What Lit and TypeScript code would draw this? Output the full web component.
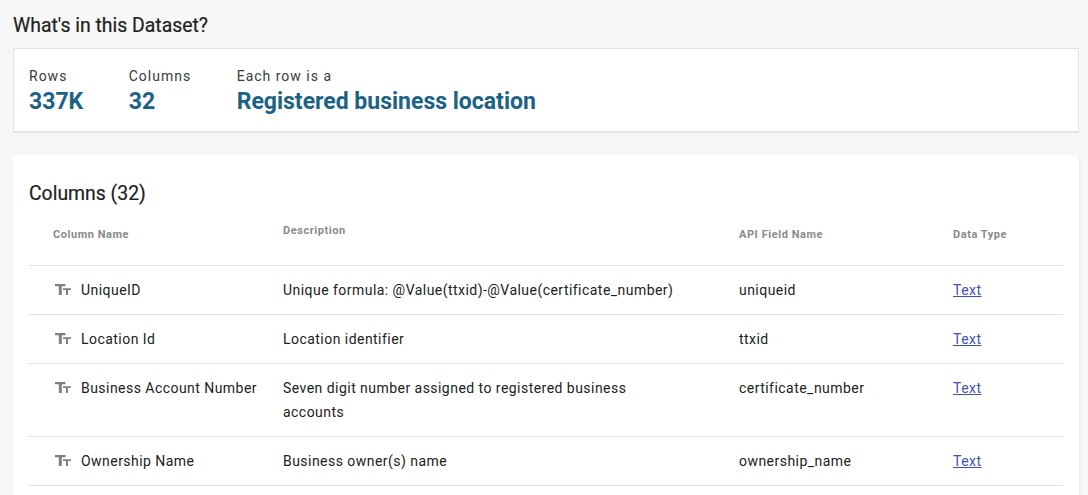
import { LitElement, html, css } from "lit";
import { customElement } from "lit/decorators.js";

const rows = [
  { name: "UniqueID", desc: "Unique formula: @Value(ttxid)-@Value(certificate_number)", api: "uniqueid" },
  { name: "Location Id", desc: "Location identifier", api: "ttxid" },
  { name: "Business Account Number", desc: "Seven digit number assigned to registered business accounts", api: "certificate_number" },
  { name: "Ownership Name", desc: "Business owner(s) name", api: "ownership_name" },
];

@customElement("app-root")
export class AppRoot extends LitElement {
  static styles = css`
    :host { display: block; height: 495px; overflow: hidden; background: #f7f7f7; font-family: Roboto, sans-serif; color: #212121; }
    .page { padding: 14px 9px 0 13px; }
    h2 { margin: 0; font-size: 19.4px; font-weight: 400; line-height: 24px; color: #212121; -webkit-text-stroke: 0.2px #212121; }
    .summary { margin-top: 10px; height: 85px; box-sizing: border-box; background: #fff; border: 1px solid #e4e4e4; border-bottom-width: 2px; padding: 18px 15px 0; display: flex; gap: 45.5px; }
    .stat-label { font-size: 14px; line-height: 18px; letter-spacing: 1px; color: #3a3a3a; }
    .stat-value { font-size: 23px; font-weight: 700; line-height: 30px; margin-top: 2px; color: #1b6285; letter-spacing: 0; }
    .card { margin-top: 22px; background: #fff; border-radius: 4px; padding: 27px 16px 40px; box-shadow: 1px 1px 2px rgba(0,0,0,0.05); }
    .row { display: grid; grid-template-columns: 254px 456px 214px 1fr; border-bottom: 1px solid #e0e0e0; padding: 12px 0; font-size: 14px; line-height: 24px; letter-spacing: 0.46px; color: #212121; }
    .head { height: 60px; box-sizing: border-box; padding: 0; font-size: 11px; font-weight: 700; letter-spacing: 0.55px; color: #8a8a8a; line-height: 16px; }
    .head > div { padding-top: 21px; }
    .head > .first { padding-left: 24px; }
    .head > .desc { padding-top: 17px; }
    .name { display: flex; align-items: flex-start; gap: 9px; padding-left: 24px; }
    .name svg { flex: none; width: 19px; height: 14px; margin-top: 5px; fill: #808080; }
    .desc-cell { padding-right: 60px; }
    a { color: #3f51b5; text-decoration: underline; }
  `;

  render() {
    return html`<div class="page">
      <h2>What's in this Dataset?</h2>
      <div class="summary">
        <div><div class="stat-label">Rows</div><div class="stat-value">337K</div></div>
        <div><div class="stat-label">Columns</div><div class="stat-value">32</div></div>
        <div><div class="stat-label">Each row is a</div><div class="stat-value">Registered business location</div></div>
      </div>
      <div class="card">
        <h2>Columns (32)</h2>
        <div class="table">
          <div class="row head">
            <div class="first">Column Name</div>
            <div class="desc">Description</div>
            <div>API Field Name</div>
            <div>Data Type</div>
          </div>
          ${rows.map((r) => html`<div class="row">
            <div class="name">
              <svg viewBox="0 0 19 14"><path d="M2 1h10.5v2.2H8.8V12H5.8V3.2H2z"/><path d="M10 5.2h8v1.8h-3V12h-2V7h-3z"/></svg>
              <span>${r.name}</span>
            </div>
            <div class="desc-cell">${r.desc}</div>
            <div>${r.api}</div>
            <div><a href="#">Text</a></div>
          </div>`)}
        </div>
      </div>
    </div>`;
  }
}
